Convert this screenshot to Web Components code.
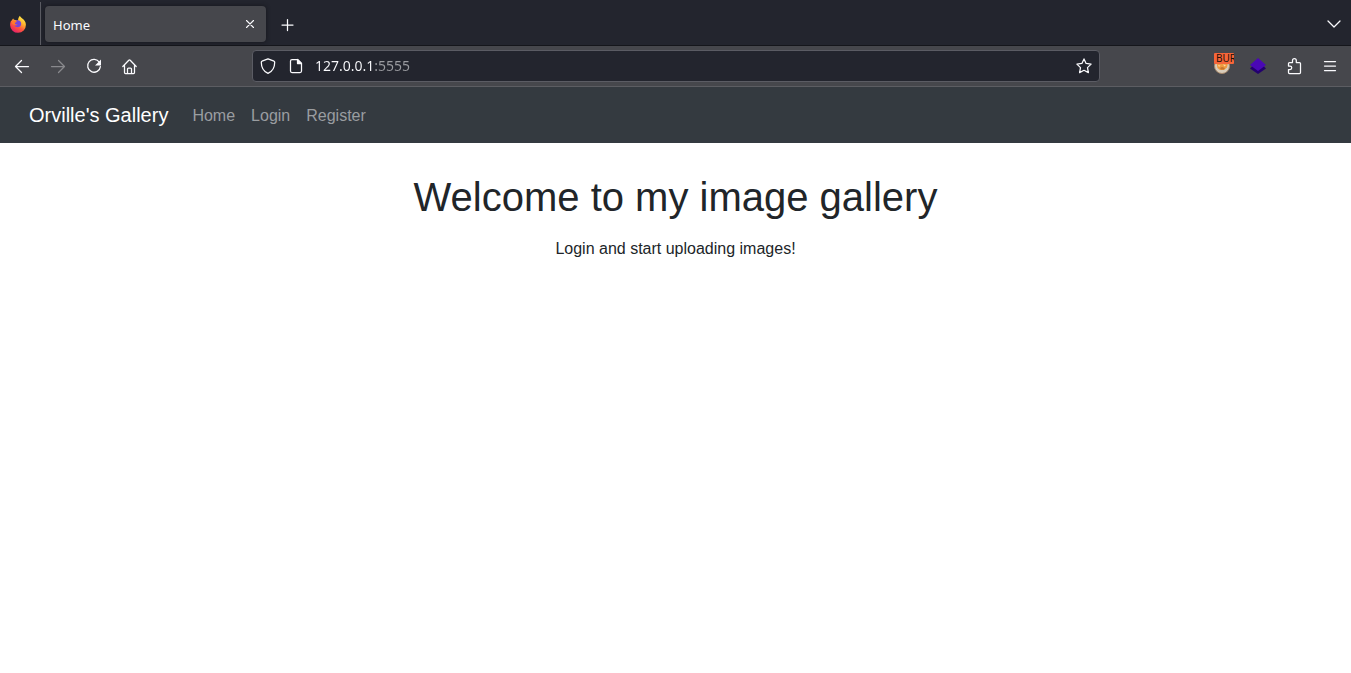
<!DOCTYPE html>
<html lang="en">
<head>
<meta charset="utf-8">
<meta name="viewport" content="width=device-width, initial-scale=1">
<title>Home</title>
<style>
  html, body { margin: 0; min-height: 100%; background: #fff; }
  body { font-family: "Liberation Sans", Arial, sans-serif; color: #212529; }
</style>
</head>
<body>
<browser-tabs>
  <browser-tab>Home</browser-tab>
</browser-tabs>
<browser-toolbar></browser-toolbar>
<gallery-navbar>
  <span slot="brand">Orville's Gallery</span>
  <gallery-link to="#home">Home</gallery-link>
  <gallery-link to="#login">Login</gallery-link>
  <gallery-link to="#register">Register</gallery-link>
</gallery-navbar>
<gallery-welcome>
  <span slot="title">Welcome to my image gallery</span>
  <span>Login and start uploading images!</span>
</gallery-welcome>

<script>
const define = (name, html, setup) => {
  const template = document.createElement('template');
  template.innerHTML = html;
  customElements.define(name, class extends HTMLElement {
    constructor() {
      super();
      this.attachShadow({ mode: 'open' }).append(template.content.cloneNode(true));
    }
    connectedCallback() { if (setup) setup(this); }
  });
};

/* Line icons are drawn on a 16 unit grid. */
const icons = {
  back: '<path d="M14.500 8.500h-13M7.500 2.500l-6 6 6 6"/>',
  forward: '<path d="M1.500 8.500h13M8.500 2.500l6 6-6 6"/>',
  reload: '<path d="M13.400 4.300A6.400 6.400 0 1 0 14.400 8.600"/><path fill="currentColor" stroke="none" d="M15 1.500v5.400a.6.600 0 0 1-.6.600H9z"/>',
  home: '<path d="M.8 8.500 6.800 2.200Q7.500 1.500 8.200 2.200L14.200 8.500M2.500 7.200v7.300q0 1 1 1h8q1 0 1-1V7.200M5.500 15.300v-4.300q0-1 1-1h2q1 0 1 1v4.300"/>',
  shield: '<path d="M8 .8 14 3.200q.7.300.7 1C14.700 9 12.700 13.300 8 15.300 3.300 13.300 1.300 9 1.300 4.200q0-.7.7-1z"/>',
  page: '<path d="M9.500 1.500H4q-1.500 0-1.500 1.500v10q0 1.500 1.500 1.500h8q1.500 0 1.500-1.500V5.500z"/><path fill="currentColor" d="M9.500 1.500v4h4z"/>',
  star: '<path d="m8 .9 2.100 4.500 5 .7-3.600 3.500.9 5L8 12.300l-4.400 2.300.9-5L.9 6.100l5-.7z"/>',
  puzzle: '<path d="M2.500 5.500q0-1 1-1h3V2.500a1.900 1.900 0 0 1 3.800 0v2h3.200q1 0 1 1v9q0 1-1 1h-10q-1 0-1-1v-3h1.500a1.600 1.600 0 0 0 0-3.500H2.500z"/>',
  menu: '<path d="M2.500 3.500h11M2.500 8h11M2.500 12.500h11"/>',
  close: '<path d="m4 4 8 8M12 4l-8 8"/>',
  plus: '<path d="M7.500 2.500v11M2 8h11"/>',
  chevron: '<path d="m3 6 6 6 6-6"/>'
};
const icon = (name, size = 16) =>
  `<svg width="${size}" height="${size}" viewBox="0 0 16 16" fill="none" stroke="currentColor" stroke-width="1.25" stroke-linecap="round" stroke-linejoin="round" aria-hidden="true">${icons[name]}</svg>`;
const tool = (name, label, size) => `<button type="button" aria-label="${label}">${icon(name, size)}</button>`;

const base = `
  *, *::before { box-sizing: border-box; }
  svg { display: block; flex: none; overflow: visible; }
  button { display: grid; place-items: center; flex: none; width: 36px; height: 32px;
    margin: 0; padding: 0; border: 0; border-radius: 4px; background: none; color: inherit; }
  button:disabled { color: #89898d; }`;

define('browser-tab', `
<style>${base}
  :host { display: flex; align-items: center; box-sizing: border-box; width: 221px; height: 36px; padding: 0 4px 0 8px;
    border-radius: 4px; background: #46474c; box-shadow: 0 0 4px #15161b;
    font: 13px/20px "Noto Sans", sans-serif; color: #fbfbfe; }
  .title { flex: 1; padding-top: 2px; }
  button { width: 24px; height: 24px; }
</style>
<span class="title"><slot></slot></span>
${tool('close', 'Close tab', 14)}`);

define('browser-tabs', `
<style>${base}
  :host { display: flex; align-items: center; height: 46px; box-sizing: border-box;
    border-bottom: 1px solid #15161b; background: #23252e; color: #fbfbfe; }
  .brand { display: flex; align-items: center; align-self: stretch; width: 41px; padding: 2px 0 0 9px; }
  .rule { width: 1px; height: 43px; margin: 2px 4px 0 -1px; background: #5b5c63; }
  .tabs { display: flex; padding-top: 2px; }
  .add { margin: 4px auto 0 4px; }
</style>
<div class="brand">
  <svg width="18" height="18" viewBox="0 0 18 18" aria-label="Firefox" role="img">
    <defs>
      <linearGradient id="flame" x1=".85" y1=".05" x2=".3" y2="1">
        <stop offset="0" stop-color="#fff14f"/><stop offset=".35" stop-color="#ffb52e"/>
        <stop offset=".65" stop-color="#ff563d"/><stop offset="1" stop-color="#e61e69"/>
      </linearGradient>
    </defs>
    <path fill="url(#flame)" d="M11 .8c.3 1.300 1.300 2 2.600 3 1.700 1.300 3.300 3.300 3.300 6a7.900 7.900 0 0 1-15.800.3c0-2 .4-3.600 1.400-4.900l.2.900C3 5 3.500 4 4.200 3.500c.2.800.9 1.400 1.700 1.500l3.200.6C8.900 4 9.700 2 11 .8z"/>
    <path fill="#7545db" d="M7 5.600c2.800-1.200 5.200.5 5.200 3.100 0 2-1.500 3.500-3.500 3.500-1.500 0-2.500-.7-3.200-1.700 1.400.3 2.500 0 3.100-1-1.700.1-2.700-.4-2.700-1.500.6-.6.7-1.600 1.100-2.400z"/>
    <path fill="#ff7a2c" d="M3.500 5.600c1.600-.5 3.200-.1 4.500 1.100-1 .8-1.900.5-2.400 1.100-.4.600.3 1.200 1.200 1.600-1.200.8-2.700.5-4-1z"/>
  </svg>
</div>
<div class="rule"></div>
<div class="tabs"><slot></slot></div>
<div class="add">${tool('plus', 'New tab')}</div>
${tool('chevron', 'List all tabs')}`);

define('address-bar', `
<style>${base}
  :host { display: flex; align-items: center; box-sizing: border-box; height: 32px; padding: 0 7px;
    border: 1px solid #5b5c64; border-radius: 4px; background: #23252e; color: #fbfbfe; }
  .site { display: flex; gap: 12px; }
  input { flex: 1; min-width: 0; height: 28px; margin: 0 8px 0 11px; padding: 0 0 2px; border: 0; outline: 0;
    font: 14px/20px "Noto Sans", sans-serif; caret-color: #fbfbfe; color: transparent;
    background: linear-gradient(to right, #fbfbfe 59px, #9a9ba0 59px) text; -webkit-background-clip: text; }
  button { width: 16px; height: 28px; }
</style>
<div class="site">${tool('shield', 'Tracking protection')}${tool('page', 'Site information')}</div>
<input type="text" aria-label="Address" value="127.0.0.1:5555" spellcheck="false">
${tool('star', 'Bookmark this page')}`);

define('browser-toolbar', `
<style>${base}
  :host { display: flex; align-items: center; box-sizing: border-box; height: 41px; padding: 0 3px 0 4px;
    border-bottom: 1px solid #5c5d62; background: #46474c; color: #fbfbfe; }
  .group { display: flex; }
  address-bar { flex: 1; margin: 0 104px; }
  .burp { position: relative; }
  .badge { position: absolute; top: 3px; left: 10px; width: 20px; height: 11px; padding-left: 2px;
    overflow: hidden; border-radius: 1px; background: #f5653a; color: #241008;
    font: 10px/11px "Noto Sans", sans-serif; text-align: left; }
  @media (max-width: 800px) { address-bar { margin: 0 8px; } }
</style>
<div class="group">
  ${tool('back', 'Back')}
  <button type="button" aria-label="Forward" disabled>${icon('forward')}</button>
  ${tool('reload', 'Reload')}${tool('home', 'Home page')}
</div>
<address-bar></address-bar>
<div class="group">
  <button class="burp" type="button" aria-label="Proxy: BUR">
    <svg width="16" height="16" viewBox="0 0 16 16" aria-hidden="true">
      <circle cx="8" cy="8" r="7.500" fill="#d9cdbb" stroke="#a98a6c"/>
      <path fill="#ef9a40" d="M2.500 5h11.500l-1 4.500-3 2.500H6L3.500 10z"/>
      <path fill="#fbd9a0" d="m4 7 2.500.5L5 9zM9 6.500l3 .5-1.500 1.500z"/>
      <path fill="#c4752d" d="m6 10 2-1 3 1-1 1.500H7z"/>
    </svg>
    <span class="badge">BUR</span>
  </button>
  <button type="button" aria-label="Layers">
    <svg width="16" height="16" viewBox="0 0 16 16" aria-hidden="true">
      <path fill="#23006e" d="M0 10.500 2.500 8h11L16 10.500 8 16z"/>
      <path fill="#4a08b5" d="m8 0 8 7-8 6-8-6z"/>
    </svg>
  </button>
  ${tool('puzzle', 'Extensions')}${tool('menu', 'Open menu')}
</div>`);

define('gallery-link', `
<style>
  :host { display: block; }
  a { display: block; padding: 9px 8px 7px; color: #9a9da0; font-size: 16px; line-height: 24px; text-decoration: none; }
  a:hover { color: #c8c9cb; }
</style>
<a><slot></slot></a>`, el => { el.shadowRoot.querySelector('a').href = el.getAttribute('to'); });

define('gallery-navbar', `
<style>
  :host { display: block; background: #343a40; }
  nav { display: flex; flex-wrap: wrap; align-items: center; padding: 8px 29px; }
  .brand { margin-right: 16px; color: #fff; font-size: 20px; line-height: 30px; text-decoration: none; }
</style>
<nav aria-label="Main">
  <a class="brand" href="#home"><slot name="brand"></slot></a>
  <slot></slot>
</nav>`);

define('gallery-welcome', `
<style>
  :host { display: block; padding: 30px 16px; text-align: center; }
  h1 { margin: 0 0 16px; font-size: 40px; font-weight: 400; line-height: 48px; }
  p { margin: 0; font-size: 16px; line-height: 24px; }
</style>
<main>
  <h1><slot name="title"></slot></h1>
  <p><slot></slot></p>
</main>`);
</script>
</body>
</html>
